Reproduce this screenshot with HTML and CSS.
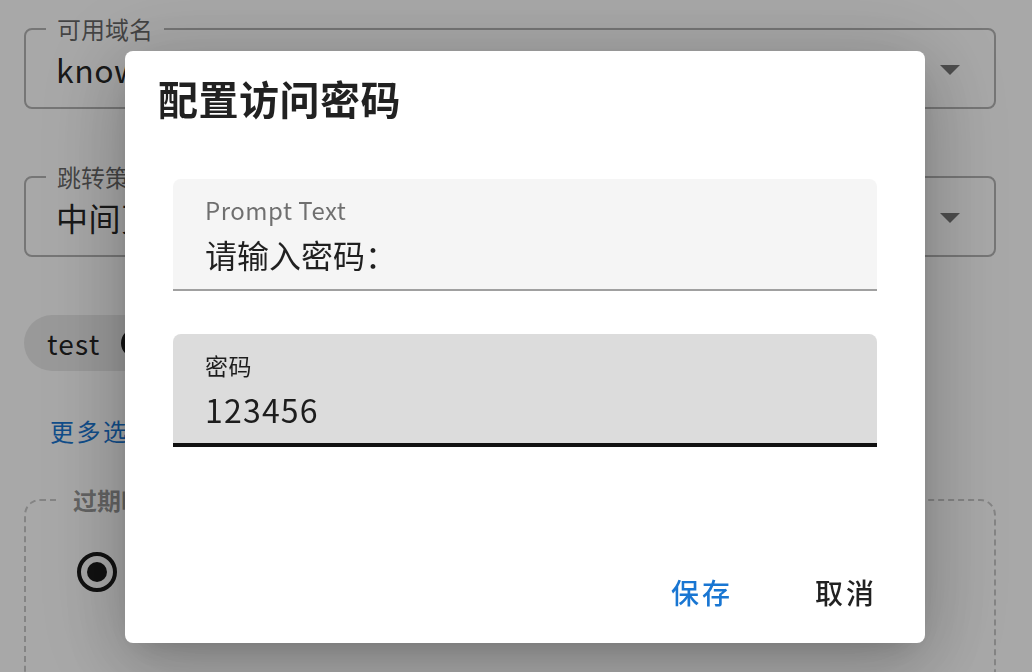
FILE: index.html
```html
<!DOCTYPE html>
<html lang="zh-CN">
  <head>
    <meta charset="UTF-8" />
    <meta name="viewport" content="width=device-width, initial-scale=1.0" />
    <title>配置访问密码</title>
    <link rel="stylesheet" href="styles.css">
  </head>
  <body>
    <div class="page">
      <fieldset class="outlined">
        <legend>可用域名</legend>
        <div class="select-row">
          <span class="select-value">know</span>
          <span class="arrow"></span>
        </div>
      </fieldset>

      <fieldset class="outlined second">
        <legend>跳转策略</legend>
        <div class="select-row">
          <span class="select-value">中间页跳转</span>
          <span class="arrow"></span>
        </div>
      </fieldset>

      <div class="chip">
        <span>test</span>
        <svg class="chip-delete" viewBox="0 0 24 24" width="30" height="30">
          <circle cx="12" cy="12" r="12" fill="#1a1a1a" />
          <path d="M8 8l8 8M16 8l-8 8" stroke="#e9e9e9" stroke-width="2.4" />
        </svg>
      </div>

      <button class="link-btn">更多选项</button>

      <fieldset class="dashed">
        <legend>过期时间</legend>
        <label class="radio-row">
          <span class="radio"><span class="radio-dot"></span></span>
          <span>永不过期</span>
        </label>
      </fieldset>
    </div>

    <div class="backdrop">
      <div class="dialog">
        <h2 class="dialog-title">配置访问密码</h2>
        <div class="dialog-content">
          <div class="filled">
            <span class="filled-label">Prompt Text</span>
            <span class="filled-value">请输入密码：</span>
          </div>
          <div class="filled focused">
            <span class="filled-label">密码</span>
            <span class="filled-value digits">123456</span>
          </div>
        </div>
        <div class="dialog-actions">
          <button class="text-btn primary">保存</button>
          <button class="text-btn">取消</button>
        </div>
      </div>
    </div>
  </body>
</html>
```

FILE: styles.css
```css
body {
  margin: 0;
  font-family: "Noto Sans CJK SC", "Noto Sans", sans-serif;
  color: rgba(0, 0, 0, 0.87);
  background: #fff;
  overflow: hidden;
}
button {
  font-family: inherit;
  border: none;
  background: none;
  cursor: pointer;
}

/* page behind the dialog */
.page {
  padding: 17px 36px 0 24px;
}
.outlined {
  margin: 0;
  padding: 0 34px 0 20px;
  border: 2px solid #b3b3b3;
  border-radius: 8px;
  min-width: 0;
}
.outlined legend {
  padding: 0 11px;
  font-size: 24px;
  line-height: 24px;
  color: rgba(0, 0, 0, 0.6);
}
.outlined.second {
  margin-top: 56px;
}
.select-row {
  display: flex;
  align-items: center;
  height: 56px;
  padding: 0 0 10px 10px;
}
.select-value {
  flex: 1;
  font-size: 32px;
  letter-spacing: 0.5px;
  white-space: nowrap;
  overflow: hidden;
}
.arrow {
  width: 0;
  height: 0;
  margin-top: 2px;
  border-left: 10px solid transparent;
  border-right: 10px solid transparent;
  border-top: 10px solid #777;
}
.chip {
  display: flex;
  align-items: center;
  gap: 20px;
  width: fit-content;
  height: 56px;
  margin-top: 58px;
  padding: 0 12px 0 23px;
  border-radius: 28px;
  background: #e9e9e9;
  font-size: 28px;
  letter-spacing: 1.2px;
}
.chip-delete {
  display: block;
}
.link-btn {
  display: block;
  margin: 44px 0 0 26px;
  padding: 0;
  font-size: 24px;
  line-height: 32px;
  letter-spacing: 2.5px;
  color: #1976d2;
}
.dashed {
  margin: 41px 0 0;
  padding: 0 30px 0 31px;
  height: 260px;
  border: 2px dashed #c8c8c8;
  border-radius: 16px;
  min-width: 0;
}
.dashed legend {
  padding: 0 16px;
  font-size: 24px;
  line-height: 24px;
  font-weight: 600;
  color: rgba(0, 0, 0, 0.42);
}
.radio-row {
  display: flex;
  align-items: center;
  gap: 14px;
  padding: 40px 0 0 20px;
  font-size: 28px;
}
.radio {
  display: flex;
  align-items: center;
  justify-content: center;
  width: 32px;
  height: 32px;
  border: 4px solid #1a1a1a;
  border-radius: 50%;
}
.radio-dot {
  width: 20px;
  height: 20px;
  border-radius: 50%;
  background: #1a1a1a;
}

/* dialog */
.backdrop {
  position: fixed;
  inset: 0;
  padding: 51px 0 0 125px;
  background: rgba(0, 0, 0, 0.34);
}
.dialog {
  display: flex;
  flex-direction: column;
  width: 800px;
  height: 592px;
  background: #fff;
  border-radius: 8px;
  box-shadow: 0 22px 70px 4px rgba(0, 0, 0, 0.14),
    0 9px 92px 16px rgba(0, 0, 0, 0.12), 0 11px 30px -14px rgba(0, 0, 0, 0.2);
}
.dialog-title {
  margin: 0;
  padding: 15px 33px 0;
  font-size: 40px;
  line-height: 64px;
  font-weight: 600;
  letter-spacing: 0.5px;
  color: rgba(0, 0, 0, 0.87);
}
.dialog-content {
  flex: 1;
  display: flex;
  flex-direction: column;
  gap: 43px;
  padding: 49px 48px 0;
}
.filled {
  display: flex;
  flex-direction: column;
  height: 112px;
  padding: 15px 32px 0;
  box-sizing: border-box;
  background: #f5f5f5;
  border-radius: 8px 8px 0 0;
  border-bottom: 2px solid #a0a0a0;
}
.filled.focused {
  background: #dcdcdc;
  border-bottom: 4px solid #111;
  height: 113px;
}
.filled-label {
  font-size: 24px;
  line-height: 32px;
  letter-spacing: 0.5px;
  color: rgba(0, 0, 0, 0.55);
}
.focused .filled-label {
  font-size: 23px;
  color: rgba(0, 0, 0, 0.87);
}
.filled-value {
  margin-top: 6px;
  font-size: 32px;
  line-height: 44px;
  color: rgba(0, 0, 0, 0.87);
}
.filled-value.digits {
  letter-spacing: 1.2px;
}
.dialog-actions {
  display: flex;
  justify-content: flex-end;
  gap: 50px;
  padding: 0 32px 27px;
}
.text-btn {
  padding: 0 16px;
  font-size: 28px;
  line-height: 48px;
  font-weight: 500;
  letter-spacing: 3px;
  color: rgba(0, 0, 0, 0.87);
}
.text-btn.primary {
  color: #1976d2;
}
```
